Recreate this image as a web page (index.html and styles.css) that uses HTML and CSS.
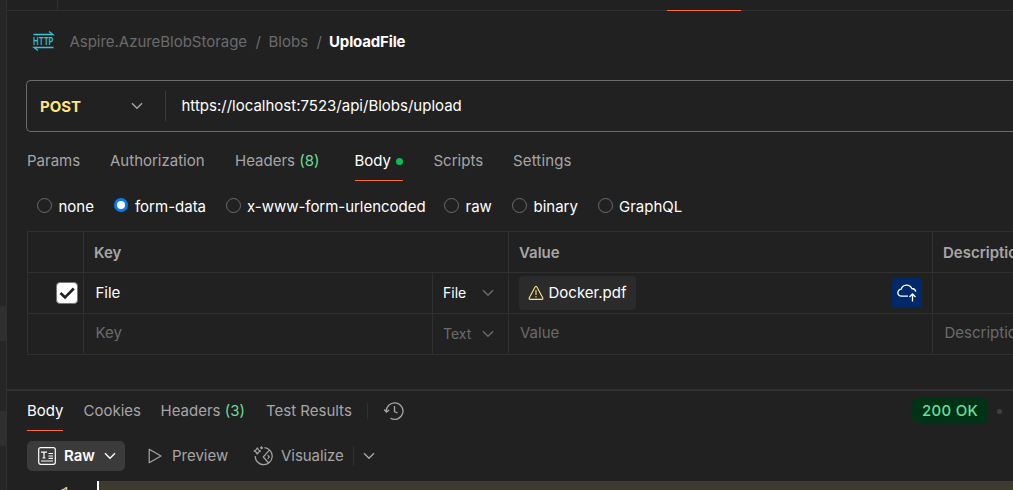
FILE: index.html
```html
<!DOCTYPE html>
<html lang="en">
<head>
<meta charset="utf-8">
<title>UploadFile</title>
<link rel="stylesheet" href="styles.css">
</head>
<body>
<div class="app">
  <aside class="sidebar"><div class="side-item side-item-a"></div><div class="side-item side-item-b"></div></aside>
  <main class="main">
    <div class="tabbar"><div class="tab-divider"></div><div class="tab-active"></div></div>
    <header class="crumbs">
      <svg class="http" width="21" height="21" viewBox="0 0 21 21"><path d="M0.500 3.500H20L16 .5M20.500 16.500H1L5 19.500" fill="none" stroke="#33c4d8" stroke-width="1.300"/><text class="http-text" x="0" y="14" textLength="20.500" lengthAdjust="spacingAndGlyphs">HTTP</text></svg>
      <span class="crumb c1">Aspire.AzureBlobStorage</span><span class="crumb c2">/</span><span class="crumb c3">Blobs</span><span class="crumb c4">/</span><span class="crumb current">UploadFile</span>
    </header>
    <section class="urlbar">
      <div class="method"><span>POST</span><svg width="12" height="8" viewBox="0 0 12 8"><path class="chev" d="M1 1.2 6 6.2 11 1.2"/></svg></div>
      <div class="url">https://localhost:7523/api/Blobs/upload</div>
    </section>
    <nav class="req-tabs">
      <span class="t-params">Params</span><span class="t-auth">Authorization</span><span class="t-head">Headers <b class="count">(8)</b></span><span class="t-body active">Body<i class="dot"></i></span><span class="t-scripts">Scripts</span><span class="t-settings">Settings</span>
    </nav>
    <div class="modes">
      <label class="m1"><i class="radio"></i>none</label><label class="m2"><i class="radio on"></i>form-data</label><label class="m3"><i class="radio"></i>x-www-form-urlencoded</label><label class="m4"><i class="radio"></i>raw</label><label class="m5"><i class="radio"></i>binary</label><label class="m6"><i class="radio"></i>GraphQL</label>
    </div>
    <div class="table">
      <div class="row head"><div class="cell"></div><div class="cell key">Key</div><div class="cell">Value</div><div class="cell">Description</div></div>
      <div class="row">
        <div class="cell check"><svg width="22" height="22" viewBox="0 0 22 22"><rect x=".5" y=".5" width="21" height="21" rx="3.5" fill="#fff" stroke="#777"/><path d="M4.500 11 9 15.500 17.800 6.500" fill="none" stroke="#212121" stroke-width="2.600"/></svg></div>
        <div class="cell val">File</div>
        <div class="cell type"><span>File</span><svg width="12" height="8" viewBox="0 0 12 8"><path class="chev dim" d="M1 1.2 6 6.2 11 1.2"/></svg></div>
        <div class="cell file"><span class="chip"><svg width="16" height="16" viewBox="0 0 16 16" fill="none" stroke="#ffe47e" stroke-width="1.1"><path d="M7.2 1.8q.8-1.2 1.6 0L14.8 13q.5 1.4-.9 1.4H2.1Q.7 14.400 1.200 13Z"/><path d="M8 5v5M8 11.300v1.200"/></svg><span>Docker.pdf</span></span>
          <span class="upload"><svg width="20" height="20" viewBox="0 0 20 20" fill="none" stroke="#fff" stroke-width="1.3"><path d="M11 13.200H4.500A3.500 3.500 0 0 1 4.200 6.200 5.700 5.700 0 0 1 14.800 5.500 4 4 0 0 1 18.800 8.600M15.500 18.500V11.500M12.500 14 15.500 11 18.500 14"/></svg></span></div>
        <div class="cell"></div>
      </div>
      <div class="row blank"><div class="cell"></div><div class="cell val">Key</div><div class="cell type"><span>Text</span><svg width="12" height="8" viewBox="0 0 12 8"><path class="chev dim" d="M1 1.2 6 6.2 11 1.2"/></svg></div><div class="cell val value">Value</div><div class="cell val">Description</div></div>
    </div>
    <section class="response">
      <nav class="res-tabs">
        <span class="r-body active">Body</span><span class="r-cookies">Cookies</span><span class="r-head">Headers <b class="count">(3)</b></span><span class="r-test">Test Results</span><i class="sep"></i>
        <svg class="history" width="20" height="20" viewBox="0 0 20 20" fill="none" stroke="#a6a6a6" stroke-width="1.3"><path d="M2.400 11A8.300 8.300 0 1 1 6.500 17.300M.3 8.500 2.400 11.200 5.200 9M10.500 5v5.500L13.500 12"/></svg>
        <span class="status">200 OK</span><i class="status-dot"></i>
      </nav>
      <div class="views">
        <div class="raw"><svg width="18" height="18" viewBox="0 0 18 18" fill="none" stroke="#fff" stroke-width="1.2"><rect x=".7" y=".7" width="16.600" height="16.600" rx="2"/><path d="M3 5.200H9M6 5v6M4.500 11h3M10.500 6.500H15M10.500 9H15M10.500 11.300H15M3 14H15"/></svg><span>Raw</span><svg class="raw-chevron" width="12" height="8" viewBox="0 0 12 8"><path class="chev bright" d="M1 1.200 6 6.200 11 1.200"/></svg></div>
        <svg class="play" width="14" height="16" viewBox="0 0 14 16"><path d="M1.200 1.300V14.700L13 8Z" fill="none" stroke="#a6a6a6" stroke-width="1.200" stroke-linejoin="round"/></svg>
        <span class="preview">Preview</span>
        <svg class="magic" width="20" height="20" viewBox="0 0 20 20" fill="none" stroke="#a6a6a6" stroke-width="1.200"><path d="M11.500 1.700A8.500 8.500 0 1 1 2.200 10M4.300 1.500Q4.900 4.400 7.800 5 4.900 5.600 4.300 8.500 3.700 5.600.8 5 3.700 4.400 4.300 1.500ZM8.500.3v3M7 1.800h3M16.200 4.300 10.200 11 15.700 17M14.700 9.200 16.200 11 14.700 13"/></svg>
        <span class="visualize">Visualize</span><i class="sep"></i>
        <svg class="view-chevron" width="12" height="8" viewBox="0 0 12 8"><path class="chev" d="M1 1.200 6 6.200 11 1.200"/></svg>
      </div>
      <div class="editor"><span class="line-number">1</span><div class="line"></div></div>
    </section>
  </main>
</div>
</body>
</html>
```
FILE: styles.css
```css
* { box-sizing: border-box; }
body { margin: 0; background: #212121; color: #fff; font: 15px/20px Inter, sans-serif; }
.app { display: grid; grid-template-columns: 7px 1fr; width: 1013px; height: 490px; overflow: hidden; }
.sidebar { background: #262626; border-right: 1px solid #303030; }
.side-item { height: 35px; background: #303030; }
.side-item-a { margin-top: 306px; }
.side-item-b { margin-top: 70px; }
.main { min-width: 0; display: flex; flex-direction: column; overflow: hidden; white-space: nowrap; }
.tabbar { height: 11px; flex: none; display: flex; background: linear-gradient(#303030, #303030) bottom / 100% 1px no-repeat; }
.tab-divider { width: 51px; border-right: 1px solid #303030; }
.tab-active { width: 74px; margin-left: 609px; border-bottom: 1px solid #ff6c37; }
.crumbs { height: 69px; flex: none; display: flex; align-items: center; padding: 0 0 7px 25.500px; color: #6b6b6b; }
.http { flex: none; margin: 0 16px 1px 0; overflow: visible; }
.http-text { fill: #33c4d8; font: 600 10.500px Inter, sans-serif; }
.c1 { width: 186px; letter-spacing: -.03px; }
.c2 { width: 13px; }
.c3 { width: 48px; }
.c4 { width: 12.500px; }
.current { color: #fff; font-weight: 700; letter-spacing: -.15px; }
.urlbar { height: 52px; flex: none; display: flex; align-items: center; margin-left: 19px; border: 1px solid #6b6b6b; border-right: 0; border-radius: 5px 0 0 5px; }
.method { display: flex; align-items: center; justify-content: space-between; width: 139px; height: 30px; padding: 0 22px 0 13px; border-right: 1px solid #3a3a3a; color: #ffe47e; font-weight: 700; }
.method span { padding-top: 1px; }
.url { padding-left: 15.500px; }
.chev { fill: none; stroke: #a6a6a6; stroke-width: 1.4; }
.dim { stroke: #6b6b6b; }
.bright { stroke: #fff; }
.req-tabs { display: flex; flex: none; height: 49px; padding: 19px 0 0 20px; color: #a6a6a6; }
.req-tabs span, .res-tabs > span { flex: none; }
.t-params { width: 83px; }
.t-auth { width: 125px; }
.t-head { width: 119.500px; }
.t-body { width: 48.500px; margin-right: 30.500px; display: flex; align-items: center; justify-content: space-between; height: 30px; padding-bottom: 9px; border-bottom: 1px solid #ff6c37; }
.t-scripts { width: 79.500px; }
.t-settings { letter-spacing: .15px; }
.active { color: #fff; }
.count { font-weight: 400; color: #6bdd9a; }
.dot { width: 7px; height: 7px; border-radius: 50%; background: #0cbb52; }
.modes { display: flex; flex: none; height: 50px; padding: 16px 0 0 30px; }
.modes label { display: flex; }
.radio { flex: none; width: 15px; height: 15px; margin: 1px 6.500px 0 0; border: 1px solid #6b6b6b; border-radius: 50%; }
.radio.on { width: 14px; height: 14px; margin-right: 7.500px; border: 3.500px solid #097bed; background: #fff; }
.m1 { width: 76.500px; }
.m2 { width: 112px; }
.m3 { width: 218.500px; letter-spacing: -.03px; }
.m4 { width: 68px; }
.m5 { width: 86px; }
.m6 .radio { margin-right: 6px; }
.table { flex: none; width: 1100px; margin-left: 20px; border: solid #303030; border-width: 1px 0 0 1px; }
.row { display: grid; grid-template-columns: 56px 349px 76px 424px 194px; height: 41px; border-bottom: 1px solid #303030; }
.cell { display: flex; align-items: center; border-right: 1px solid #303030; padding-left: 10px; }
.key { grid-column: span 2; }
.head { color: #a6a6a6; font-weight: 600; }
.head .cell { padding-top: 2px; }
.val { padding-left: 11.500px; }
.blank .val { padding-bottom: 2px; }
.blank .value { padding-left: 11px; }
.check { padding-left: 28px; }
.type { justify-content: space-between; padding-right: 14px; font-size: 14px; }
.file { justify-content: space-between; padding-right: 10px; }
.chip { display: flex; align-items: center; gap: 4.500px; width: 117px; height: 34px; padding-left: 9px; background: #2b2b2b; border-radius: 4px; }
.upload { display: grid; place-items: center; width: 30px; height: 30px; border-radius: 4px; background: #00296b; }
.blank { color: #6b6b6b; }
.response { flex: none; margin-top: 34px; border-top: 2px solid #303030; }
.res-tabs { display: flex; height: 40px; padding: 10px 0 0 20px; color: #a6a6a6; }
.r-body { width: 36px; height: 30px; margin-right: 20.500px; border-bottom: 1px solid #ff6c37; }
.r-cookies { width: 77px; }
.r-head { width: 105.500px; }
.r-test { width: 101px; }
.sep { width: 1px; height: 16px; margin-top: 2px; background: #303030; }
.history { margin-left: 15.500px; }
.res-tabs .status { width: 76px; height: 25px; margin: -3px 9px 0 508.500px; padding-top: 3px; text-align: center; color: #6bdd9a; background: #003315; border-radius: 6px; letter-spacing: .25px; font-weight: 500; }
.status-dot { width: 5px; height: 5px; margin-top: 8px; border-radius: 50%; background: #404040; }
.views { display: flex; align-items: center; height: 50px; padding: 0 0 0 20px; color: #a6a6a6; }
.views > * { flex: none; }
.raw { display: flex; align-items: center; width: 98px; height: 30px; padding: 0 9px 0 11px; border-radius: 5px; background: #3b3b3b; color: #fff; font-weight: 600; }
.raw span { width: 48px; padding-left: 8px; }
.raw-chevron { flex: none; }
.play { margin-left: 23px; }
.preview { width: 81px; margin-left: 10px; }
.magic { margin-right: 8px; }
.visualize { width: 72px; letter-spacing: -.05px; }
.views .sep { height: 20px; margin-top: 0; }
.view-chevron { margin-left: 9px; }
.editor { display: flex; height: 60px; }
.line-number { width: 90px; padding: 1px 26px 0 0; text-align: right; color: #d4c9a0; font: 18px/24px "Liberation Mono", monospace; }
.line { flex: 1; background: #3d3b2f; border-left: 2px solid #fff; }
```
